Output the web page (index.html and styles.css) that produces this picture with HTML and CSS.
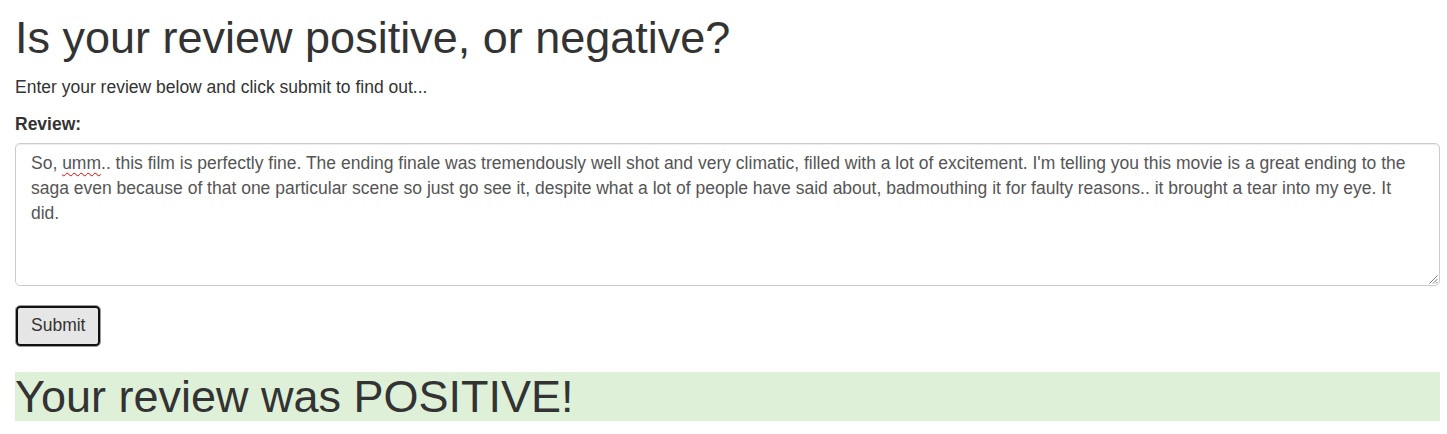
FILE: index.html
```html
<!DOCTYPE html>
<html lang="en">
<head>
<meta charset="utf-8">
<title>Review sentiment</title>
<link rel="stylesheet" href="styles.css">
</head>
<body>
<div class="container">
  <h1 class="title">Is your review positive, or negative?</h1>
  <p class="lead-text">Enter your review below and click submit to find out...</p>
  <form class="review-form">
    <div class="form-group">
      <label class="field-label">Review:</label>
      <div class="textbox" role="textbox">So, <span class="misspelled">umm</span>.. this film is perfectly fine. The ending finale was tremendously well shot and very climatic, filled with a lot of excitement. I'm telling you this movie is a great ending to the saga even because of that one particular scene so just go see it, despite what a lot of people have said about, badmouthing it for faulty reasons.. it brought a tear into my eye. It did.<svg class="grip" width="10" height="10" viewBox="0 0 10 10"><path d="M9.5 1.5 L1.5 9.5 M9.5 5 L5 9.5 M9.5 8 L8 9.5" stroke="#7a7a7a" stroke-width="1" fill="none"/></svg></div>
    </div>
    <button type="button" class="btn">Submit</button>
  </form>
  <h1 class="result">Your review was POSITIVE!</h1>
</div>
</body>
</html>
```
FILE: styles.css
```css
* { box-sizing: border-box; }
html, body { margin: 0; padding: 0; background: #fff; }
body {
  font-family: "Liberation Sans", Arial, sans-serif;
  font-size: 17.5px;
  line-height: 25px;
  color: #333;
}
.container { padding: 0 7px 0 15px; }
.title {
  font-size: 45px;
  font-weight: 400;
  line-height: 1.1;
  margin: 13px 0 12.5px;
}
.lead-text { margin: 0 0 11.5px; }
.review-form { margin: 0; }
.form-group { margin-bottom: 19px; }
.field-label {
  display: block;
  font-weight: 700;
  margin-bottom: 6px;
}
.textbox {
  position: relative;
  height: 143px;
  width: 100%;
  border: 1px solid #ccc;
  border-radius: 5px;
  padding: 7.5px 15px;
  color: #555;
  box-shadow: inset 0 1px 1px rgba(0,0,0,0.075);
}
.misspelled {
  text-decoration: underline wavy #e00;
  text-decoration-thickness: 1px;
  text-underline-offset: 3px;
}
.grip { position: absolute; right: 1px; bottom: 1px; }
.btn {
  font-family: inherit;
  font-size: 17.5px;
  line-height: 25px;
  color: #333;
  background: #e6e6e6;
  border: 1px solid #9a9a9a;
  border-radius: 5px;
  padding: 7.5px 15px;
  box-shadow: inset 0 0 0 2px #111;
  cursor: pointer;
}
.result {
  font-size: 45px;
  font-weight: 400;
  line-height: 1.1;
  margin: 25px 0 12.5px;
  background: #dff0d8;
}
```
